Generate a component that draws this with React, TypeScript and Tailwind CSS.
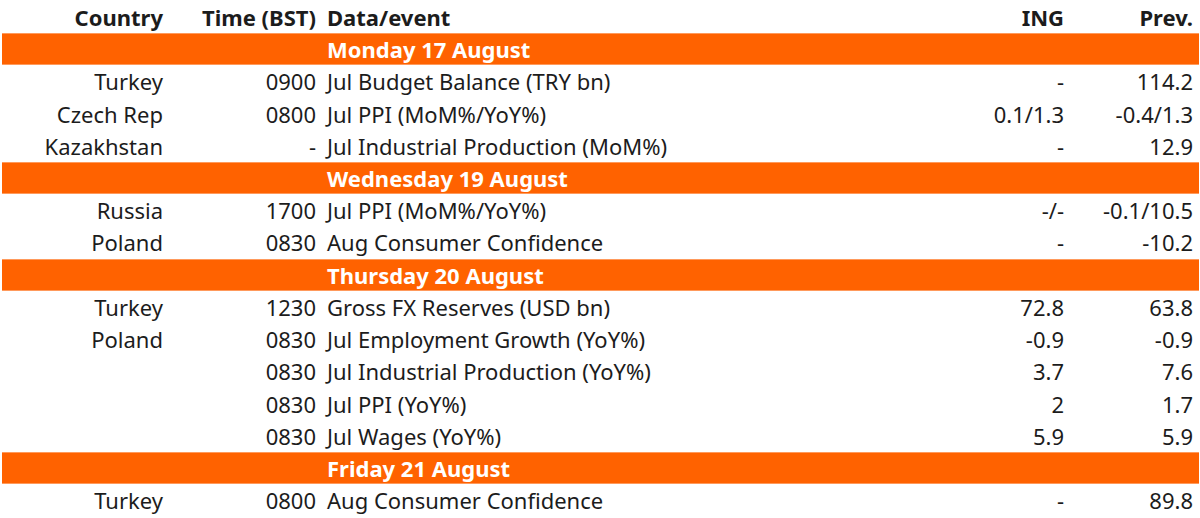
type Row =
  | { kind: "day"; label: string }
  | { kind: "data"; country: string; time: string; event: string; ing: string; prev: string };

const rows: Row[] = [
  { kind: "day", label: "Monday 17 August" },
  { kind: "data", country: "Turkey", time: "0900", event: "Jul Budget Balance (TRY bn)", ing: "-", prev: "114.2" },
  { kind: "data", country: "Czech Rep", time: "0800", event: "Jul PPI (MoM%/YoY%)", ing: "0.1/1.3", prev: "-0.4/1.3" },
  { kind: "data", country: "Kazakhstan", time: "-", event: "Jul Industrial Production (MoM%)", ing: "-", prev: "12.9" },
  { kind: "day", label: "Wednesday 19 August" },
  { kind: "data", country: "Russia", time: "1700", event: "Jul PPI (MoM%/YoY%)", ing: "-/-", prev: "-0.1/10.5" },
  { kind: "data", country: "Poland", time: "0830", event: "Aug Consumer Confidence", ing: "-", prev: "-10.2" },
  { kind: "day", label: "Thursday 20 August" },
  { kind: "data", country: "Turkey", time: "1230", event: "Gross FX Reserves (USD bn)", ing: "72.8", prev: "63.8" },
  { kind: "data", country: "Poland", time: "0830", event: "Jul Employment Growth (YoY%)", ing: "-0.9", prev: "-0.9" },
  { kind: "data", country: "", time: "0830", event: "Jul Industrial Production (YoY%)", ing: "3.7", prev: "7.6" },
  { kind: "data", country: "", time: "0830", event: "Jul PPI (YoY%)", ing: "2", prev: "1.7" },
  { kind: "data", country: "", time: "0830", event: "Jul Wages (YoY%)", ing: "5.9", prev: "5.9" },
  { kind: "day", label: "Friday 21 August" },
  { kind: "data", country: "Turkey", time: "0800", event: "Aug Consumer Confidence", ing: "-", prev: "89.8" },
];

export default function App() {
  return (
    <div
      className="w-[1200px] h-[518px] bg-white pl-[2px] pr-[1px] text-[22px] leading-none text-[#1c1c1c] overflow-hidden"
      style={{ fontFamily: '"Noto Sans", "Open Sans", sans-serif' }}
    >
      <div className="flex h-[33px] items-center font-bold">
        <div className="w-[161px] text-right">Country</div>
        <div className="w-[153px] text-right">Time (BST)</div>
        <div className="flex-1 pl-[11px]">Data/event</div>
        <div className="w-[150px] text-right">ING</div>
        <div className="w-[135px] pr-[6px] text-right">Prev.</div>
      </div>
      {rows.map((r, i) =>
        r.kind === "day" ? (
          <div
            key={i}
            className="flex h-[32.23px] items-center bg-[#ff6200] border-y border-[#ff9a5c] font-bold text-white"
          >
            <div className="w-[314px]" />
            <div className="flex-1 pl-[11px]">{r.label}</div>
          </div>
        ) : (
          <div key={i} className="flex h-[32.23px] items-center">
            <div className="w-[161px] text-right">{r.country}</div>
            <div className="w-[153px] text-right">{r.time}</div>
            <div className="flex-1 pl-[11px]">{r.event}</div>
            <div className="w-[150px] text-right">{r.ing}</div>
            <div className="w-[135px] pr-[6px] text-right">{r.prev}</div>
          </div>
        )
      )}
    </div>
  );
}
